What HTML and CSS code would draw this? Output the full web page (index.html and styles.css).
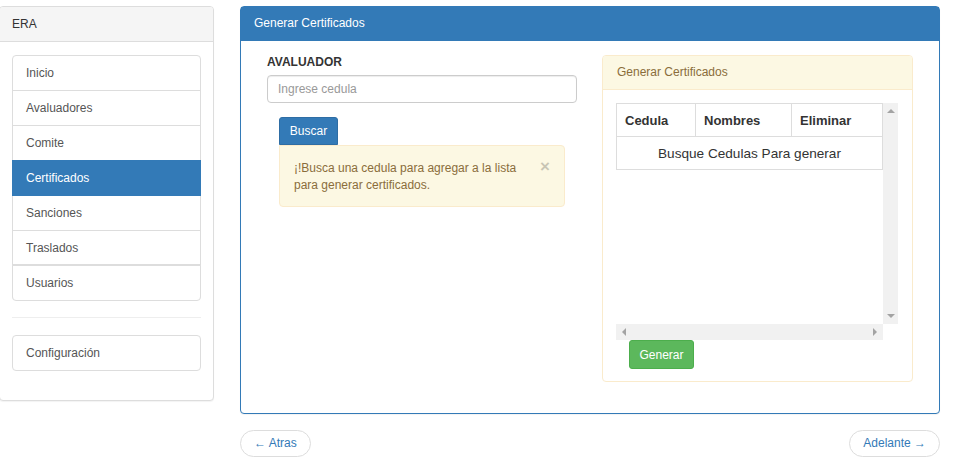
FILE: index.html
```html
<!DOCTYPE html>
<html lang="es">
<head>
<meta charset="utf-8">
<title>ERA - Generar Certificados</title>
<link rel="stylesheet" href="styles.css">
</head>
<body>
<div class="page">
  <aside class="side-panel">
    <div class="side-heading">ERA</div>
    <div class="side-body">
      <ul class="list">
        <li class="list-item">Inicio</li>
        <li class="list-item">Avaluadores</li>
        <li class="list-item">Comite</li>
        <li class="list-item active">Certificados</li>
        <li class="list-item">Sanciones</li>
        <li class="list-item">Traslados</li>
        <li class="list-item sep">Usuarios</li>
      </ul>
      <hr class="divider">
      <ul class="list">
        <li class="list-item">Configuración</li>
      </ul>
    </div>
  </aside>

  <main class="main-col">
    <section class="main-panel">
      <div class="main-heading">Generar Certificados</div>
      <div class="main-body">
        <div class="left-col">
          <label class="field-label">AVALUADOR</label>
          <input class="field-input" type="text" placeholder="Ingrese cedula">
          <div class="search-box">
            <button class="btn btn-primary">Buscar</button>
            <div class="alert">
              <span class="alert-text">¡!Busca una cedula para agregar a la lista para generar certificados.</span>
              <span class="alert-close">×</span>
            </div>
          </div>
        </div>
        <div class="right-col">
          <div class="warn-panel">
            <div class="warn-heading">Generar Certificados</div>
            <div class="warn-body">
              <div class="scroll-area">
                <div class="scroll-content">
                  <table class="table">
                    <thead>
                      <tr><th class="c1">Cedula</th><th class="c2">Nombres</th><th class="c3">Eliminar</th></tr>
                    </thead>
                    <tbody>
                      <tr><td colspan="3">Busque Cedulas Para generar</td></tr>
                    </tbody>
                  </table>
                </div>
                <div class="vtrack"><span class="arr up"></span><span class="arr down"></span></div>
                <div class="htrack"><span class="arr left"></span><span class="arr right"></span></div>
                <div class="corner"></div>
              </div>
              <button class="btn btn-success">Generar</button>
            </div>
          </div>
        </div>
      </div>
    </section>
    <nav class="pager">
      <a class="pager-btn">← Atras</a>
      <a class="pager-btn">Adelante →</a>
    </nav>
  </main>
</div>
</body>
</html>
```

FILE: styles.css
```css
* { box-sizing: border-box; }
html, body { margin: 0; padding: 0; background: #fff; }
body {
  font-family: "Liberation Sans", Arial, Helvetica, sans-serif;
  font-size: 12px;
  color: #333;
  width: 956px;
  height: 461px;
  overflow: hidden;
}
.page {
  display: flex;
  align-items: flex-start;
  padding-top: 6px;
}

/* Sidebar */
.side-panel {
  width: 215px;
  margin-left: -1px;
  border: 1px solid #ddd;
  border-radius: 4px;
  box-shadow: 0 1px 1px rgba(0,0,0,.05);
  background: #fff;
}
.side-heading {
  height: 35px;
  line-height: 34px;
  padding: 0 12px;
  background: #f5f5f5;
  border-bottom: 1px solid #ddd;
  border-radius: 3px 3px 0 0;
  color: #333;
}
.side-body {
  padding: 13px 12px 29px 12px;
}
.list {
  list-style: none;
  margin: 0;
  padding: 0;
}
.list-item {
  position: relative;
  border: 1px solid #ddd;
  margin-bottom: -1px;
  padding: 10px 13px;
  line-height: 14px;
  height: 36px;
  color: #555;
  background: #fff;
}
.list-item:first-child { border-radius: 4px 4px 0 0; }
.list-item:last-child { border-radius: 0 0 4px 4px; margin-bottom: 0; }
.list-item:only-child { border-radius: 4px; }
.list-item.active {
  background: #337ab7;
  border-color: #337ab7;
  color: #fff;
  z-index: 2;
}
.list-item.sep { box-shadow: 0 -1px 0 #ddd; }
.divider {
  border: 0;
  border-top: 1px solid #eee;
  margin: 16px 0 17px 0;
  height: 0;
}

/* Main */
.main-col {
  width: 700px;
  margin-left: 26px;
}
.main-panel {
  border: 1px solid #337ab7;
  border-radius: 4px;
  background: #fff;
  box-shadow: 0 1px 1px rgba(0,0,0,.05);
}
.main-heading {
  height: 34px;
  line-height: 33px;
  padding: 0 13px;
  background: #337ab7;
  color: #fff;
}
.main-body {
  display: flex;
  gap: 25px;
  padding: 14px 26px 31px 26px;
}
.left-col {
  width: 310px;
  display: flex;
  flex-direction: column;
  align-items: stretch;
}
.field-label {
  font-weight: bold;
  line-height: 14px;
  margin-bottom: 6px;
  color: #333;
}
.field-input {
  height: 28px;
  border: 1px solid #ccc;
  border-radius: 4px;
  padding: 0 10px;
  font: inherit;
  font-size: 12px;
  color: #555;
  box-shadow: inset 0 1px 1px rgba(0,0,0,.075);
  outline: none;
}
.field-input::placeholder { color: #999; }
.search-box {
  padding: 0 12px;
  margin-top: 14px;
  display: flex;
  flex-direction: column;
  align-items: flex-start;
}
.btn {
  font-family: inherit;
  font-size: 12px;
  border: 1px solid transparent;
  cursor: pointer;
  line-height: 14px;
}
.btn-primary {
  width: 59px;
  height: 28px;
  background: #337ab7;
  border-color: #2e6da4;
  color: #fff;
  border-radius: 3px 3px 0 0;
  padding: 0;
}
.alert {
  align-self: stretch;
  display: flex;
  justify-content: space-between;
  align-items: flex-start;
  min-height: 61px;
  padding: 14px 14px 12px 14px;
  background: #fcf8e3;
  border: 1px solid #faebcc;
  border-radius: 0 4px 4px 4px;
  color: #8a6d3b;
  line-height: 17px;
}
.alert-text { width: 230px; }
.alert-close {
  font-size: 17px;
  font-weight: bold;
  line-height: 14px;
  color: #000;
  opacity: .2;
}

.right-col { width: 311px; }
.warn-panel {
  border: 1px solid #faebcc;
  border-radius: 4px;
  background: #fff;
}
.warn-heading {
  height: 34px;
  line-height: 33px;
  padding: 0 14px;
  background: #fcf8e3;
  border-bottom: 1px solid #faebcc;
  border-radius: 3px 3px 0 0;
  color: #8a6d3b;
}
.warn-body {
  padding: 13px 14px 12px 13px;
}
.scroll-area {
  display: grid;
  grid-template-columns: 267px 15px;
  grid-template-rows: 221px 16px;
}
.scroll-content { overflow: hidden; }
.table {
  width: 267px;
  border-collapse: collapse;
  font-size: 13px;
  color: #333;
}
.table th, .table td {
  border: 1px solid #ddd;
  height: 33px;
  padding: 0 8px;
}
.table th { text-align: left; font-weight: bold; }
.table td { text-align: center; font-size: 13.6px; }
.c1 { width: 79px; }
.c2 { width: 96px; }
.vtrack {
  background: #f1f1f1;
  display: flex;
  flex-direction: column;
  justify-content: space-between;
  align-items: center;
  padding: 6px 0;
}
.htrack {
  background: #f1f1f1;
  display: flex;
  justify-content: space-between;
  align-items: center;
  padding: 0 6px;
}
.corner { background: #fff; }
.arr { width: 0; height: 0; display: block; }
.arr.up { border-left: 4px solid transparent; border-right: 4px solid transparent; border-bottom: 4px solid #a3a3a3; }
.arr.down { border-left: 4px solid transparent; border-right: 4px solid transparent; border-top: 4px solid #a3a3a3; }
.arr.left { border-top: 4px solid transparent; border-bottom: 4px solid transparent; border-right: 4px solid #a3a3a3; }
.arr.right { border-top: 4px solid transparent; border-bottom: 4px solid transparent; border-left: 4px solid #a3a3a3; }
.btn-success {
  display: block;
  margin-left: 13px;
  width: 65px;
  height: 29px;
  background: #5cb85c;
  border-color: #4cae4c;
  color: #fff;
  border-radius: 3px;
  padding: 0;
}

.pager {
  display: flex;
  justify-content: space-between;
  margin-top: 16px;
}
.pager-btn {
  display: inline-block;
  height: 27px;
  line-height: 25px;
  padding: 0 13px;
  border: 1px solid #ddd;
  border-radius: 15px;
  background: #fff;
  color: #337ab7;
  text-decoration: none;
}
```
